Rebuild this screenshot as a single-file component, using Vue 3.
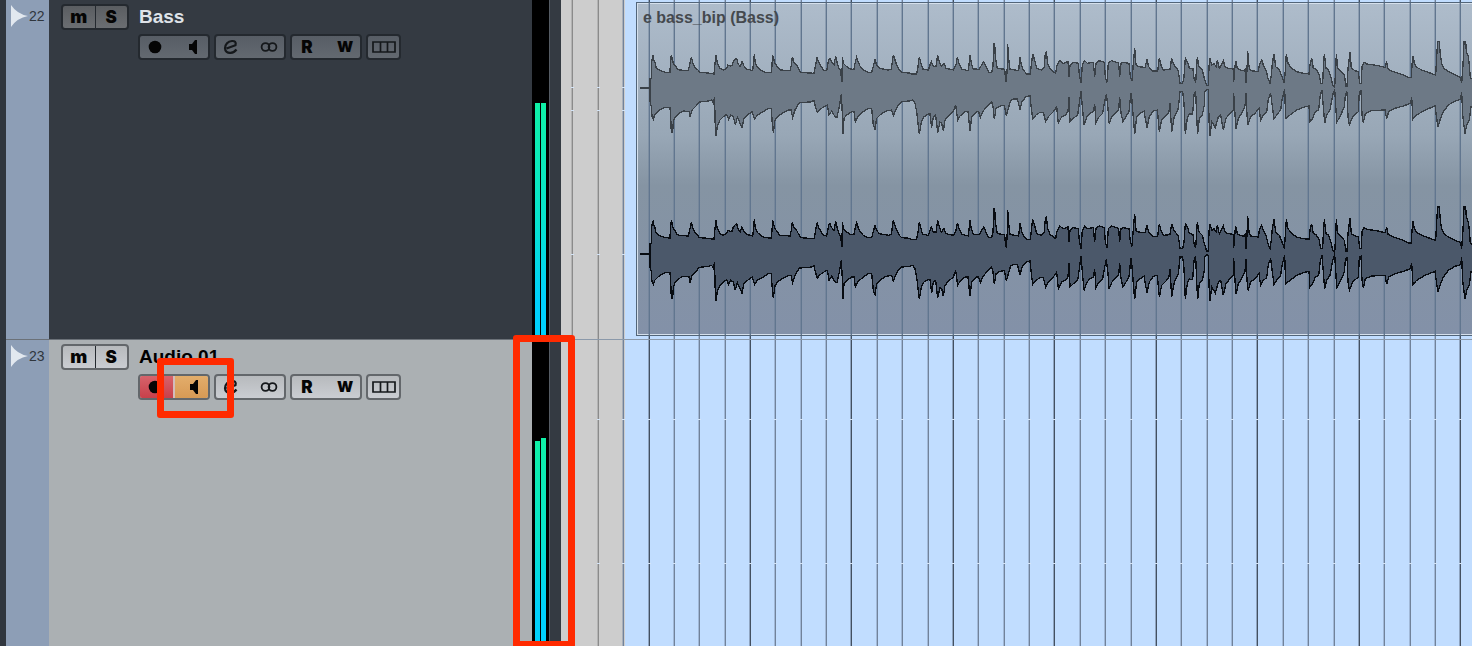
<script setup>
const tracks = [
  { id: 22, name: 'Bass', selected: false, levels: [232, 232], meterBase: 4 },
  { id: 23, name: 'Audio 01', selected: true, levels: [200, 203], meterBase: 5 },
]

const beats = Array.from({ length: 80 }, (_, i) => ({
  x: Math.floor(11.9 + i * 25.37),
  bar: i % 4 === 3,
  early: i < 2,
}))
const clipBeats = beats.filter((b) => b.x > 80)
const marks = [87, 110, 254, 419, 563]

const upper = [
  '33,264 60,264 60,235 64,235 64,187 70,165 71,180 75,187 78,202 83,208 92,212 105,217 120,218 121,195 124,165 130,190 136,197 142,208 150,210 175,212 180,190 184,172 189,190 195,202 204,210 208,217 235,219 252,222 255,190 258,165 262,190 270,205 280,210 290,205 294,195 300,198 306,197 310,185 316,178 320,175 324,190 330,200 336,185 342,198 350,207 368,212 370,195 373,162 376,190 384,203 392,210 405,217 424,218 426,195 428,165 434,188 442,200 450,210 480,212 484,195 487,170 492,187 500,195 506,207 512,217 552,220 556,200 561,172 566,187 574,200 580,210 590,212 596,180 600,175 605,187 612,195 617,168 622,190 628,208 633,212 634,243 636,243 637,170 640,190 645,195 650,200 660,207 672,208 675,190 680,172 684,185 690,198 700,210 715,217 725,217 730,198 735,180 740,195 748,205 775,210 784,207 787,185 790,165 795,180 800,195 808,210 815,217 838,219',
  '4,222 20,222 24,200 28,170 32,187 38,207 55,210 60,195 64,185 70,200 78,200 83,165 88,185 94,200 102,190 108,205 130,210 138,195 142,172 147,190 155,207 175,212 178,185 180,165 184,190 190,207 208,208 213,198 221,185 228,200 236,217 245,217 249,200 252,130 254,130 256,172 262,205 284,208 286,232 289,247 292,200 293,133 296,175 300,207 315,210 326,212 330,172 334,195 340,210 350,222 361,222 364,195 368,162 374,180 380,205 395,210 403,200 405,168 409,153 413,190 420,207 437,220 440,200 449,182 460,190 474,185 477,230 480,195 490,187 505,190 508,225 513,250 517,195 524,182 532,190 550,187 554,230 558,190 567,182 583,187 586,232 591,247 595,190 604,182 620,187 626,190 629,230 633,190 640,187 657,190 661,230 666,243 670,190 674,145 678,195 685,200 705,202 711,180 716,200 728,213 743,213 748,175 753,195 760,210 780,208 785,175 792,195 805,212 810,250 818,250 822,230 826,175 834,190 838,205',
  '0,205 9,207 12,235 17,247 20,200 22,170 27,200 37,210 43,235 50,257 55,257 57,200 60,175 65,195 72,190 78,200 82,180 88,205 96,190 100,182 105,200 115,205 130,207 131,247 135,200 137,182 142,205 150,210 160,212 165,207 168,250 171,210 173,152 177,200 182,212 205,215 208,195 215,180 220,195 228,210 234,235 240,250 244,225 247,190 252,162 257,200 268,210 278,235 283,250 287,195 289,162 294,190 305,205 320,215 340,220 357,222 360,195 365,175 370,205 378,207 388,225 392,250 398,250 400,205 403,162 408,205 415,208 424,235 428,255 434,262 437,210 439,162 443,205 452,212 463,225 468,258 471,258 474,205 480,157 484,205 495,212 505,215 509,250 514,250 516,200 522,187 530,192 560,196 585,202 590,185 594,207 610,215 640,225 655,233 664,233 666,195 669,167 673,190 680,202 700,212 737,225 740,170 743,125 748,125 751,165 755,190 762,205 775,215 795,225 812,232 815,250 819,195 822,125 827,125 829,155 835,170 838,195 841,235 860,240',
]
const lower = [
  '33,266 60,266 60,305 64,320 66,350 70,357 74,345 82,337 92,328 105,322 120,322 122,350 124,398 128,398 130,365 136,350 150,338 160,333 178,335 180,352 186,330 198,318 208,306 235,303 245,300 250,310 254,290 255,360 258,407 262,378 270,360 280,350 290,343 296,358 302,345 310,350 316,375 322,352 328,365 336,383 342,355 355,343 366,335 374,357 382,345 400,335 415,325 424,325 426,360 430,398 435,360 445,348 460,338 475,330 483,330 488,352 495,330 508,308 540,306 552,302 556,320 562,338 570,328 585,318 592,315 597,345 605,333 615,350 621,352 628,320 634,283 637,340 639,402 642,355 650,345 665,335 672,335 676,365 683,350 700,335 715,325 725,325 730,375 735,388 740,355 752,343 768,333 785,330 790,347 797,330 805,315 815,305 838,303',
  '8,300 15,310 20,335 24,370 28,402 34,365 42,350 55,342 60,342 65,383 70,350 77,345 83,398 90,367 95,370 100,393 105,360 115,348 130,335 137,315 143,360 150,348 165,335 174,335 180,393 185,350 200,335 206,335 211,352 218,335 230,320 245,305 249,320 253,357 258,325 270,318 283,316 289,347 295,325 302,302 310,297 322,297 330,328 336,305 348,290 360,287 364,325 368,357 378,345 390,337 400,337 407,365 415,350 430,335 440,320 445,370 455,350 466,345 474,335 477,292 480,365 490,355 503,345 508,310 513,272 517,320 522,375 530,352 540,340 550,335 554,312 558,367 566,352 578,340 583,310 589,282 594,325 597,370 606,350 620,335 626,330 629,292 633,340 639,365 648,350 657,335 662,285 664,278 668,330 674,402 680,350 690,340 702,333 711,383 718,350 730,333 742,330 748,395 755,360 770,345 777,335 780,310 785,395 793,350 805,325 810,275 818,275 822,310 826,402 832,355 838,340',
  '0,342 8,342 12,285 17,273 20,350 23,402 28,355 37,345 43,315 44,275 50,268 55,270 57,360 60,407 65,365 76,383 85,350 92,345 100,390 108,355 120,340 130,330 131,278 135,345 138,387 145,355 155,340 165,318 168,280 171,345 174,375 182,350 195,340 207,325 212,360 220,345 230,337 235,298 242,280 247,320 252,357 260,345 272,330 276,300 284,268 287,355 300,345 320,330 340,322 357,318 360,365 368,355 376,335 386,330 391,285 396,270 400,320 404,370 410,345 420,330 428,285 434,268 438,330 440,367 450,350 463,320 466,285 471,275 474,350 478,375 488,350 505,335 508,275 513,272 516,345 520,368 526,340 545,332 585,330 590,357 596,335 615,325 640,318 662,310 665,292 669,357 680,345 705,330 735,318 740,355 744,380 750,360 760,335 775,315 795,303 812,298 815,275 818,345 825,402 830,375 838,360 843,320 860,315',
]
const join = (parts) =>
  parts.flatMap((part, i) =>
    part.split(' ').map((p) => {
      const [x, y] = p.split(',').map(Number)
      return [x + i * 840, y]
    }),
  )
const wave = [...join(upper), ...join(lower).reverse()].map((p) => p.join(',')).join(' ')
const channels = [
  { name: 'left', shift: 0 },
  { name: 'right', shift: 496 },
]
</script>

<template>
  <div class="project">
    <aside class="track-list">
      <section v-for="t in tracks" :key="t.id" class="track" :class="{ selected: t.selected }">
        <div class="index">
          <svg width="18" height="22" viewBox="0 0 18 22"><path d="M0 0Q6 9 17 11Q6 13 0 22Z" fill="#e2e8ef" /></svg>
          <span>{{ t.id }}</span>
        </div>
        <div class="panel">
          <div class="group mute-solo">
            <button type="button" aria-label="Mute" class="m">m</button>
            <button type="button" aria-label="Solo">S</button>
          </div>
          <div class="info">
            <h2>{{ t.name }}</h2>
            <div class="controls">
              <div class="group pair">
                <button type="button" aria-label="Record enable" class="record">
                  <svg width="14" height="14" viewBox="0 0 14 14"><circle cx="7" cy="7" r="6.3" fill="#050505" /></svg>
                </button>
                <button type="button" aria-label="Monitor" class="monitor">
                  <svg width="10" height="16" viewBox="0 0 10 16"><path d="M1 5H4L7 1H9V15H7L4 11H1Z" fill="#050505" /></svg>
                </button>
              </div>
              <div class="group pair">
                <button type="button" aria-label="Edit channel settings">
                  <svg width="16" height="16" viewBox="0 0 16 16"><path d="M3.500 9.500L12.500 6.200C13.500 3 11.500 1.800 9 2C5 2.300 2 5.500 2 9.300C2 12.500 4.500 14 7.500 13.800C10 13.600 12 12.500 13.500 10.500" fill="none" stroke="#15181b" stroke-width="2.2" /></svg>
                </button>
                <button type="button" aria-label="Stereo">
                  <svg width="18" height="12" viewBox="0 0 18 12"><g fill="none" stroke="#15181b" stroke-width="1.8"><circle cx="5.500" cy="6" r="3.900" /><circle cx="12.500" cy="6" r="3.900" /></g></svg>
                </button>
              </div>
              <div class="group pair">
                <button type="button" aria-label="Read automation">R</button>
                <button type="button" aria-label="Write automation" class="w">W</button>
              </div>
              <div class="group lanes">
                <button type="button" aria-label="Show lanes">
                  <svg width="24" height="12" viewBox="0 0 24 12"><path d="M1 1H23V11H1ZM8.500 1V11M15.500 1V11" fill="none" stroke="#15181b" stroke-width="1.700" /></svg>
                </button>
              </div>
            </div>
          </div>
        </div>
        <div class="meter" :style="{ paddingBottom: t.meterBase + 'px' }">
          <i v-for="(level, i) in t.levels" :key="i" :style="{ height: level + 'px' }"></i>
        </div>
        <div class="gutter"></div>
      </section>
    </aside>

    <main class="arrange">
      <svg class="grid" width="100%" height="100%" shape-rendering="crispEdges">
        <g v-for="b in beats" :key="b.x" :class="['beat', { bar: b.bar, early: b.early }]">
          <rect :x="b.x" y="0" width="1" height="100%" />
          <rect :x="b.x - 1" y="0" width="1" height="100%" class="soft" />
          <rect v-for="m in marks" :key="m" :x="b.x - 1" :y="m" width="3" height="1" class="mark" />
        </g>
      </svg>
      <div class="lane">
        <article class="clip">
          <svg class="grid" width="100%" height="100%" shape-rendering="crispEdges">
            <g v-for="b in clipBeats" :key="b.x" fill="#61768f">
              <rect :x="b.x - 76" y="0" width="1" height="100%" />
              <rect :x="b.x - 77" y="0" width="1" height="100%" class="soft" />
            </g>
          </svg>
          <h3>e bass_bip (Bass)</h3>
          <svg class="wave" width="840" height="304" viewBox="21 87 2520 912" shape-rendering="crispEdges">
            <polygon v-for="c in channels" :key="c.name" :class="c.name" :points="wave" :transform="`translate(0 ${c.shift})`" />
          </svg>
        </article>
      </div>
      <div class="lane"></div>
    </main>

    <div class="callout monitor-callout"></div>
    <div class="callout meter-callout"></div>
  </div>
</template>

<style>
body {
  margin: 0;
  overflow: hidden;
}
</style>

<style scoped>
.project {
  position: relative;
  display: flex;
  height: 100vh;
  overflow: hidden;
  background: #30363e;
  font-family: "Liberation Sans", Arial, sans-serif;
}
.track-list {
  flex: 0 0 555px;
  padding-left: 6px;
  display: grid;
  grid-template-rows: 340px 1fr;
}
.track {
  display: flex;
  background: #343a42;
}
.track:first-child {
  border-bottom: 1px solid #6b7178;
}
.track.selected {
  background: #abb0b3;
}
.index {
  flex: 0 0 43px;
  box-sizing: border-box;
  padding: 5px 0 0 5px;
  display: flex;
  align-items: flex-start;
  background: #8d9eb6;
  color: #30363d;
  font-size: 14px;
  line-height: 22px;
}
.panel {
  flex: 1;
  display: flex;
  align-items: flex-start;
  gap: 9px;
  padding: 4px 0 0 12px;
}
.group {
  box-sizing: border-box;
  display: flex;
  width: 72px;
  height: 26px;
  border: 2px solid #24292f;
  border-radius: 4px;
  overflow: hidden;
  background: linear-gradient(#575d65, #636970);
}
.group.mute-solo {
  width: 68px;
  background: linear-gradient(#5a5d61, #6b6e72);
}
.group.lanes {
  width: 35px;
}
.selected .group,
.selected .group.mute-solo {
  border-color: #63676b;
  background: linear-gradient(#b7babd, #cacdd2);
}
button {
  flex: 1;
  box-sizing: border-box;
  display: flex;
  align-items: center;
  justify-content: center;
  padding: 0;
  border: 0;
  background: none;
  color: #050505;
  font: 900 17px/20px Inter, "Liberation Sans", sans-serif;
}
.pair button:first-child {
  padding-right: 4px;
}
.pair button:last-child {
  padding-left: 4px;
}
.mute-solo button + button {
  border-left: 1px solid #24292f;
}
.m {
  font-size: 18px;
}
.w {
  font-size: 15px;
}
.selected .record {
  background: linear-gradient(#d7636b, #c8404a);
  border-right: 2px solid #d3bcbc;
}
.selected .monitor {
  background: linear-gradient(#e3ad6b, #d79a55);
}
.info h2 {
  margin: 0 0 4px 1px;
  color: #dfe3e9;
  font-size: 19px;
  line-height: 26px;
  font-weight: 700;
}
.selected .info h2 {
  color: #000;
}
.controls {
  display: flex;
  gap: 4px;
}
.meter {
  flex: 0 0 17px;
  box-sizing: border-box;
  display: flex;
  align-items: flex-end;
  gap: 1px;
  padding-left: 3px;
  background: #000;
}
.meter i {
  width: 5px;
  background: linear-gradient(#0ff0a6, #08e3cc 50%, #00cffb 85%, #00cffb);
}
.gutter {
  flex: 0 0 12px;
  box-sizing: border-box;
  border-left: 1px solid #555c64;
  background: #343a42;
}
.arrange {
  position: relative;
  flex: 1;
  min-width: 0;
  display: grid;
  grid-template-rows: 340px 1fr;
  background: linear-gradient(90deg, #cdcdcd 64px, #c1ddff 64px);
}
.grid {
  position: absolute;
  inset: 0;
}
.beat {
  fill: #71829a;
}
.beat.bar {
  fill: #435061;
}
.beat.early {
  fill: #8b8b8b;
}
.soft {
  fill-opacity: 0.4;
}
.mark {
  fill: #d4e4f7;
}
.lane {
  position: relative;
  box-sizing: border-box;
  min-width: 0;
  padding: 2px 0 3px 75px;
}
.lane:first-of-type {
  border-bottom: 1px solid #8b99aa;
}
.clip {
  position: relative;
  box-sizing: border-box;
  height: 100%;
  overflow: hidden;
  border: solid #526579;
  border-width: 1px 0 1px 1px;
  background: linear-gradient(#aebccb, #98a7b6 40%, #8594a3 55%, #8391a8);
  box-shadow: inset 1px 1px #d5e0ec, inset 0 -1px #d5e0ec;
}
.clip h3 {
  position: relative;
  margin: 0 0 0 6px;
  height: 26px;
  color: #45494e;
  font-size: 16px;
  line-height: 29px;
  font-weight: 700;
}
.wave {
  position: relative;
  display: block;
}
.left {
  fill: #6d7986;
  stroke: #3a4148;
  stroke-width: 4;
}
.right {
  fill: #4b586a;
  stroke: #080c12;
  stroke-width: 4;
}
.callout {
  position: absolute;
  box-sizing: border-box;
  border: 7px solid #ff2a00;
  border-radius: 3px;
}
.monitor-callout {
  left: 157px;
  top: 358px;
  width: 77px;
  height: 60px;
}
.meter-callout {
  left: 513px;
  top: 335px;
  bottom: -2px;
  width: 62px;
}
</style>
